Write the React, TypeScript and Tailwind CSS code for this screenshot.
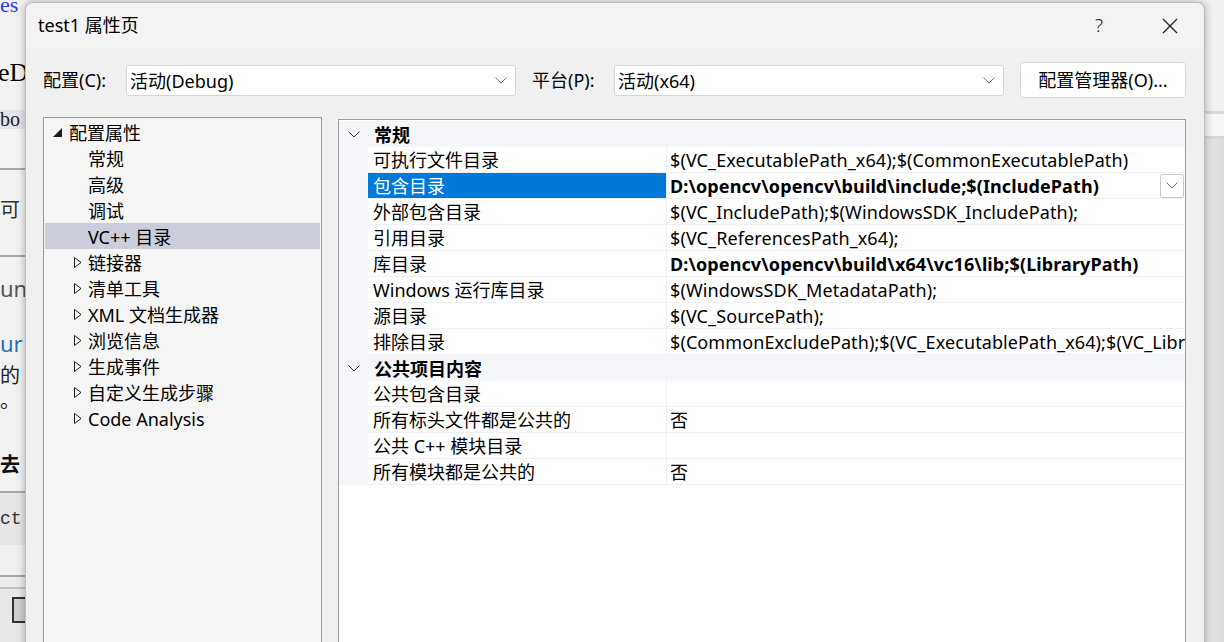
import React from 'react';

const font = "font-['Noto_Sans','Noto_Sans_CJK_SC',sans-serif]";

type Prop = { name: string; value: string; bold?: boolean; selected?: boolean };

const general: Prop[] = [
  { name: '可执行文件目录', value: '$(VC_ExecutablePath_x64);$(CommonExecutablePath)' },
  { name: '包含目录', value: 'D:\\opencv\\opencv\\build\\include;$(IncludePath)', bold: true, selected: true },
  { name: '外部包含目录', value: '$(VC_IncludePath);$(WindowsSDK_IncludePath);' },
  { name: '引用目录', value: '$(VC_ReferencesPath_x64);' },
  { name: '库目录', value: 'D:\\opencv\\opencv\\build\\x64\\vc16\\lib;$(LibraryPath)', bold: true },
  { name: 'Windows 运行库目录', value: '$(WindowsSDK_MetadataPath);' },
  { name: '源目录', value: '$(VC_SourcePath);' },
  { name: '排除目录', value: '$(CommonExcludePath);$(VC_ExecutablePath_x64);$(VC_LibraryPath_x64)' },
];

const publicItems: Prop[] = [
  { name: '公共包含目录', value: '' },
  { name: '所有标头文件都是公共的', value: '否' },
  { name: '公共 C++ 模块目录', value: '' },
  { name: '所有模块都是公共的', value: '否' },
];

const treeChildren = ['常规', '高级', '调试', 'VC++ 目录'];
const treeCollapsed = ['链接器', '清单工具', 'XML 文档生成器', '浏览信息', '生成事件', '自定义生成步骤', 'Code Analysis'];

function Chevron({ className = '' }: { className?: string }) {
  return (
    <svg width="12" height="7" viewBox="0 0 12 7" className={className}>
      <polyline points="0.5,0.5 6,6 11.5,0.5" fill="none" stroke="currentColor" strokeWidth="1" />
    </svg>
  );
}

function Select({ text }: { text: string }) {
  return (
    <div className="mt-[3px] w-[390px] h-[31px] bg-white border border-[#d5d5d5] rounded-[3px] flex items-center justify-between pl-[3px] pr-[8px]">
      <span className="pt-[2px] text-[18px] text-black">{text}</span>
      <Chevron className="text-[#707070]" />
    </div>
  );
}

function Category({ title }: { title: string }) {
  return (
    <div className="h-[26px] bg-[#f4f6fa] flex items-center">
      <div className="w-[29px] flex justify-center text-[#333]">
        <Chevron />
      </div>
      <span className="pl-[6px] pt-[2px] text-[18px] font-bold text-black">{title}</span>
    </div>
  );
}

function Row({ p }: { p: Prop }) {
  return (
    <div className="h-[26px] flex bg-[#f4f6fa]">
      <div className="w-[29px] shrink-0" />
      <div
        className={`w-[298px] shrink-0 flex items-center pl-[5px] pt-[2px] text-[18px] border-b border-[#eef0f4] whitespace-nowrap ${
          p.selected ? 'bg-[#0078d7] text-white' : 'bg-white text-black'
        }`}
      >
        {p.name}
      </div>
      <div className="flex-1 min-w-0 flex items-center bg-white border-l border-b border-[#eef0f4] pl-[3px] overflow-hidden">
        <span className={`pt-[2px] whitespace-nowrap text-[18px] tracking-[0.1px] text-black ${p.bold ? 'font-bold' : ''}`}>
          {p.value}
        </span>
        {p.selected && (
          <div className="ml-auto mr-[1px] w-[24px] h-[24px] shrink-0 bg-white border border-[#c8c8c8] rounded-[2px] flex items-center justify-center text-[#707070]">
            <Chevron />
          </div>
        )}
      </div>
    </div>
  );
}

function BackgroundStrip() {
  return (
    <div className="w-[25px] shrink-0 h-full overflow-hidden bg-[#f2f2f2] flex flex-col font-['Liberation_Serif','Noto_Sans_CJK_SC',serif]">
      <div className="h-[14px] text-[22px] text-[#2a3ee0] whitespace-nowrap leading-[10px]">es</div>
      <div className="h-[44px]" />
      <div className="h-[30px] text-[26px] text-black whitespace-nowrap -ml-[2px] leading-[30px]">eD</div>
      <div className="h-[22px]" />
      <div className="h-[19px] bg-[#e4e4ec] text-[20px] whitespace-nowrap leading-[19px] text-[#222]">bo</div>
      <div className="h-[39px] bg-[#f4f4f4]" />
      <div className="h-[2px] bg-[#a8a8a8]" />
      <div className="h-[26px]" />
      <div className="h-[26px] text-[20px] text-[#333] whitespace-nowrap font-['Noto_Sans_CJK_SC',sans-serif] leading-[26px]">可</div>
      <div className="h-[33px]" />
      <div className="h-[2px] bg-[#a8a8a8]" />
      <div className="h-[18px]" />
      <div className="h-[26px] text-[22px] text-[#555] whitespace-nowrap font-['Noto_Sans',sans-serif] leading-[26px]">un</div>
      <div className="h-[31px]" />
      <div className="h-[22px] text-[22px] text-[#1d6fc4] whitespace-nowrap font-['Noto_Sans',sans-serif] leading-[22px]">ur</div>
      <div className="h-[9px]" />
      <div className="h-[24px] text-[20px] text-[#222] whitespace-nowrap font-['Noto_Sans_CJK_SC',sans-serif] leading-[24px]">的</div>
      <div className="h-[2px]" />
      <div className="h-[22px] text-[20px] text-[#222] whitespace-nowrap font-['Noto_Sans_CJK_SC',sans-serif] leading-[22px]">。</div>
      <div className="h-[40px]" />
      <div className="h-[26px] text-[20px] font-bold text-[#111] whitespace-nowrap font-['Noto_Sans_CJK_SC',sans-serif] leading-[26px]">去</div>
      <div className="h-[14px]" />
      <div className="h-[2px] bg-[#a8a8a8]" />
      <div className="h-[52px] bg-[#e6e6e6] flex items-center text-[18px] text-[#333] font-['Liberation_Mono',monospace] whitespace-nowrap">ct</div>
      <div className="h-[30px] bg-[#f0f0f0]" />
      <div className="h-[2px] bg-[#a8a8a8]" />
      <div className="h-[10px] bg-[#ececec]" />
      <div className="h-[2px] bg-[#c0c0c0]" />
      <div className="flex-1 bg-[#e8e8e8] pl-[12px] pt-[8px]">
        <div className="w-[20px] h-[26px] border-2 border-[#333] bg-[#cfcfcf]" />
      </div>
    </div>
  );
}

export default function App() {
  return (
    <div className={`w-[1224px] h-[642px] overflow-hidden flex bg-[#f2f2f2] ${font}`}>
      <BackgroundStrip />

      {/* dialog */}
      <div className="relative z-10 w-[1180px] shrink-0 mt-[2px] h-[660px] bg-[#f0f0f0] border border-[#bdbdbd] rounded-t-[8px] shadow-[0_0_8px_rgba(0,0,0,0.3)] flex flex-col">
        <div className="h-[45px] shrink-0 flex items-center pl-[12px] bg-[#f3f3f3] rounded-t-[8px]">
          <span className="text-[18px] text-black">test1 属性页</span>
          <span className="ml-auto mr-[59px] text-[19px] text-[#222] font-light">?</span>
          <svg width="16" height="16" viewBox="0 0 16 16" className="mr-[26px]">
            <path d="M1 1 L15 15 M15 1 L1 15" stroke="#222" strokeWidth="1.3" />
          </svg>
        </div>

        <div className="mt-[14px] h-[36px] shrink-0 flex items-start pl-[17px]">
          <span className="mt-[5px] w-[83px] text-[18px] text-black whitespace-nowrap">配置(C):</span>
          <Select text="活动(Debug)" />
          <span className="mt-[5px] ml-[16px] w-[82px] text-[18px] text-black whitespace-nowrap">平台(P):</span>
          <Select text="活动(x64)" />
          <button className="ml-[16px] w-[166px] h-[36px] bg-white border border-[#d5d5d5] rounded-[4px] text-[18px] text-black whitespace-nowrap">
            配置管理器(O)...
          </button>
        </div>

        <div className="mt-[19px] flex-1 flex pl-[17px]">
          {/* tree */}
          <div className="w-[279px] h-full bg-[#f5f5f5] border border-[#9a9a9a] p-[1px]">
            <div className="h-[26px] flex items-center">
              <svg width="9" height="9" viewBox="0 0 9 9" className="ml-[8px]">
                <polygon points="9,0 9,9 0,9" fill="#1e1e1e" />
              </svg>
              <span className="ml-[7px] pt-[2px] text-[18px] text-black">配置属性</span>
            </div>
            {treeChildren.map((t) => (
              <div
                key={t}
                className={`h-[26px] flex items-center pl-[43px] pt-[2px] text-[18px] text-black ${
                  t === 'VC++ 目录' ? 'bg-[#cbcdda]' : ''
                }`}
              >
                {t}
              </div>
            ))}
            {treeCollapsed.map((t) => (
              <div key={t} className="h-[26px] flex items-center">
                <svg width="8" height="11" viewBox="0 0 8 11" className="ml-[29px]">
                  <polygon points="0.5,0.5 7,5.5 0.5,10.5" fill="none" stroke="#1e1e1e" strokeWidth="1" />
                </svg>
                <span className="ml-[6px] pt-[2px] text-[18px] text-black whitespace-nowrap">{t}</span>
              </div>
            ))}
          </div>

          {/* property grid */}
          <div className="ml-[16px] mt-[2px] w-[848px] h-full bg-white border border-[#9a9a9a] pt-[1px] overflow-hidden">
            <Category title="常规" />
            {general.map((p) => (
              <Row key={p.name} p={p} />
            ))}
            <Category title="公共项目内容" />
            {publicItems.map((p) => (
              <Row key={p.name} p={p} />
            ))}
          </div>
        </div>
      </div>

      {/* right background */}
      <div className="flex-1 h-full flex flex-col bg-[#f0f0f0]">
        <div className="h-[111px]" />
        <div className="h-[3px] bg-[#d8d8e0]" />
        <div className="h-[22px] bg-[#f6f6f6]" />
        <div className="h-[3px] bg-[#d8d8e0]" />
        <div className="flex-1 bg-gradient-to-r from-[#e8e8e8] to-[#dcdcdc]" />
      </div>
    </div>
  );
}
